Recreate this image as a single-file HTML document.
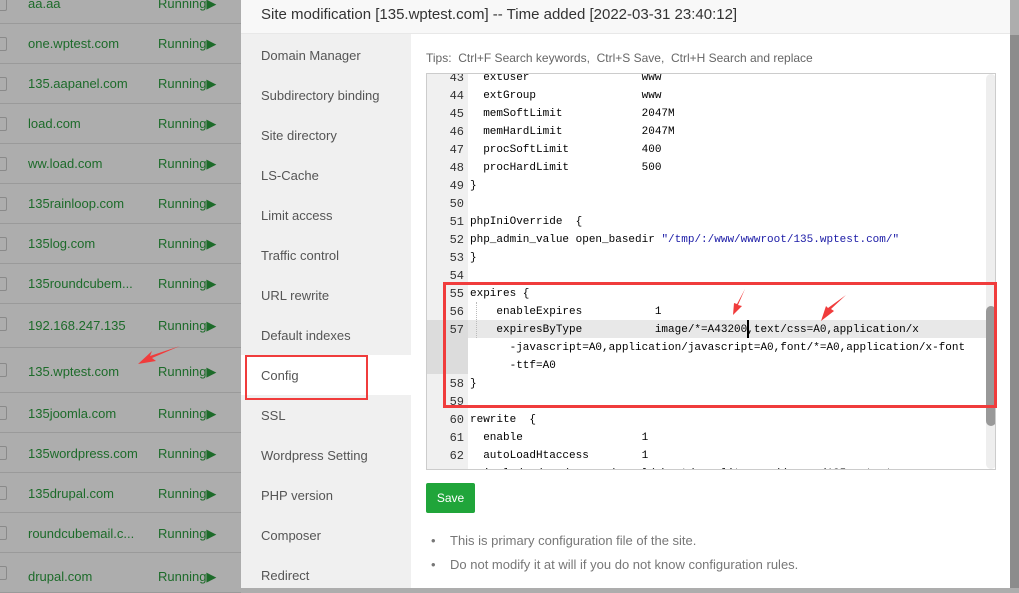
<!DOCTYPE html>
<html><head><meta charset="utf-8"><style>
*{margin:0;padding:0;box-sizing:border-box}
body{width:1019px;height:588px;overflow:hidden;position:relative;font-family:"Liberation Sans",sans-serif;background:#adadad}
.row{position:absolute;left:0;width:241px;height:40px;border-bottom:1px solid #9a9a9a;font-size:13px}
.row .cb{position:absolute;left:-6px;top:13px;width:13px;height:14px;border:1px solid #8a8a8a;border-radius:2px}
.row .n{position:absolute;left:28px;color:#1d6b2a}
.row .s{position:absolute;left:158px;color:#1d6b2a}
.modal{position:absolute;left:241px;top:0;width:769px;height:588px;background:#fff}
.title{height:34px;background:#f8f8f8;border-bottom:1px solid #e8e8e8;font-size:15px;color:#333;padding:6px 0 0 20px}
.menu{position:absolute;left:0;top:34px;width:170px;height:554px;background:#f0f0f0}
.mi{position:absolute;left:20px;font-size:13px;color:#555}
.ed{position:absolute;left:185px;top:73px;width:570px;height:397px;border:1px solid #ccc;overflow:hidden;background:#fff}
.gut{position:absolute;left:0;top:0;width:41px;height:100%;background:#f0f0f0}
.ln{position:absolute;left:0;width:37px;text-align:right;font:12px "Liberation Mono",monospace;color:#333;height:18px;line-height:18px}
.cd{position:absolute;left:43px;font:11px "Liberation Mono",monospace;color:#000;white-space:pre;height:18px;line-height:18px}
.str{color:#1a1aa6}
</style></head><body>
<div class="row" style="top:-16px"><div class="cb"></div><span class="n" style="top:12px">aa.aa</span><span class="s" style="top:12px">Running▶</span></div>
<div class="row" style="top:24px"><div class="cb"></div><span class="n" style="top:12px">one.wptest.com</span><span class="s" style="top:12px">Running▶</span></div>
<div class="row" style="top:64px"><div class="cb"></div><span class="n" style="top:12px">135.aapanel.com</span><span class="s" style="top:12px">Running▶</span></div>
<div class="row" style="top:104px"><div class="cb"></div><span class="n" style="top:12px">load.com</span><span class="s" style="top:12px">Running▶</span></div>
<div class="row" style="top:144px"><div class="cb"></div><span class="n" style="top:12px">ww.load.com</span><span class="s" style="top:12px">Running▶</span></div>
<div class="row" style="top:184px"><div class="cb"></div><span class="n" style="top:12px">135rainloop.com</span><span class="s" style="top:12px">Running▶</span></div>
<div class="row" style="top:224px"><div class="cb"></div><span class="n" style="top:12px">135log.com</span><span class="s" style="top:12px">Running▶</span></div>
<div class="row" style="top:264px"><div class="cb"></div><span class="n" style="top:12px">135roundcubem...</span><span class="s" style="top:12px">Running▶</span></div>
<div class="row" style="top:304px;height:44px"><div class="cb"></div><span class="n" style="top:14px">192.168.247.135</span><span class="s" style="top:14px">Running▶</span></div>
<div class="row" style="top:348px;height:45px"><div class="cb" style="top:15px"></div><span class="n" style="top:16px">135.wptest.com</span><span class="s" style="top:16px">Running▶</span></div>
<div class="row" style="top:393px"><div class="cb"></div><span class="n" style="top:13px">135joomla.com</span><span class="s" style="top:13px">Running▶</span></div>
<div class="row" style="top:433px"><div class="cb"></div><span class="n" style="top:13px">135wordpress.com</span><span class="s" style="top:13px">Running▶</span></div>
<div class="row" style="top:473px"><div class="cb"></div><span class="n" style="top:13px">135drupal.com</span><span class="s" style="top:13px">Running▶</span></div>
<div class="row" style="top:513px"><div class="cb"></div><span class="n" style="top:13px">roundcubemail.c...</span><span class="s" style="top:13px">Running▶</span></div>
<div class="row" style="top:553px"><div class="cb"></div><span class="n" style="top:16px">drupal.com</span><span class="s" style="top:16px">Running▶</span></div>
<svg style="position:absolute;left:136px;top:344px" width="46" height="24"><path d="M44 2 L14 12 L16 7 L2 20 L20 17 L16 14 Z" fill="#f03c3c"/></svg>
<div style="position:absolute;left:1010px;top:35px;width:9px;height:553px;background:#8c8c8c"></div>

<div class="modal">
<div class="title">Site modification [135.wptest.com] -- Time added [2022-03-31 23:40:12]</div>
<div class="menu">
<div class="mi" style="top:14px">Domain Manager</div>
<div class="mi" style="top:54px">Subdirectory binding</div>
<div class="mi" style="top:94px">Site directory</div>
<div class="mi" style="top:134px">LS-Cache</div>
<div class="mi" style="top:174px">Limit access</div>
<div class="mi" style="top:214px">Traffic control</div>
<div class="mi" style="top:254px">URL rewrite</div>
<div class="mi" style="top:294px">Default indexes</div>
<div style="position:absolute;left:0;top:321px;width:170px;height:40px;background:#fff"></div>
<div style="position:absolute;left:4px;top:321px;width:123px;height:45px;border:2px solid #f03c3c"></div>
<div class="mi" style="top:334px">Config</div>
<div class="mi" style="top:374px">SSL</div>
<div class="mi" style="top:414px">Wordpress Setting</div>
<div class="mi" style="top:454px">PHP version</div>
<div class="mi" style="top:494px">Composer</div>
<div class="mi" style="top:534px">Redirect</div>
</div>
<div style="position:absolute;left:185px;top:51px;font-size:12px;color:#666">Tips:&nbsp; Ctrl+F Search keywords,&nbsp; Ctrl+S Save,&nbsp; Ctrl+H Search and replace</div>
<div class="ed">
<div class="gut"></div>
<div style="position:absolute;left:0;top:246px;width:41px;height:54px;background:#dcdcdc"></div>
<div style="position:absolute;left:41px;top:246px;width:520px;height:18px;background:#e8e8e8"></div>
<div style="position:absolute;left:49px;top:228px;width:0;height:36px;border-left:1px dotted #bbb"></div>
<div class="ln" style="top:-5px">43</div><div class="cd" style="top:-5px">  extUser                 www</div>
<div class="ln" style="top:13px">44</div><div class="cd" style="top:13px">  extGroup                www</div>
<div class="ln" style="top:31px">45</div><div class="cd" style="top:31px">  memSoftLimit            2047M</div>
<div class="ln" style="top:49px">46</div><div class="cd" style="top:49px">  memHardLimit            2047M</div>
<div class="ln" style="top:67px">47</div><div class="cd" style="top:67px">  procSoftLimit           400</div>
<div class="ln" style="top:85px">48</div><div class="cd" style="top:85px">  procHardLimit           500</div>
<div class="ln" style="top:103px">49</div><div class="cd" style="top:103px">}</div>
<div class="ln" style="top:121px">50</div>
<div class="ln" style="top:139px">51</div><div class="cd" style="top:139px">phpIniOverride  {</div>
<div class="ln" style="top:157px">52</div><div class="cd" style="top:157px">php_admin_value open_basedir <span class="str">"/tmp/:/www/wwwroot/135.wptest.com/"</span></div>
<div class="ln" style="top:175px">53</div><div class="cd" style="top:175px">}</div>
<div class="ln" style="top:193px">54</div>
<div class="ln" style="top:211px">55</div><div class="cd" style="top:211px">expires {</div>
<div class="ln" style="top:229px">56</div><div class="cd" style="top:229px">    enableExpires           1</div>
<div class="ln" style="top:247px">57</div><div class="cd" style="top:247px">    expiresByType           image/*=A43200,text/css=A0,application/x</div>
<div class="cd" style="top:265px">      -javascript=A0,application/javascript=A0,font/*=A0,application/x-font</div>
<div class="cd" style="top:283px">      -ttf=A0</div>
<div class="ln" style="top:301px">58</div><div class="cd" style="top:301px">}</div>
<div class="ln" style="top:319px">59</div>
<div class="ln" style="top:337px">60</div><div class="cd" style="top:337px">rewrite  {</div>
<div class="ln" style="top:355px">61</div><div class="cd" style="top:355px">  enable                  1</div>
<div class="ln" style="top:373px">62</div><div class="cd" style="top:373px">  autoLoadHtaccess        1</div>
<div class="ln" style="top:391px">63</div><div class="cd" style="top:391px">  include /usr/server/panel/vhost/openlitespeed/proxy/135.wptest.com</div>
<div style="position:absolute;left:559px;top:0;width:10px;height:395px;background:#eee;border-radius:5px"></div>
<div style="position:absolute;left:559px;top:232px;width:10px;height:120px;background:#999;border-radius:5px"></div>
<div style="position:absolute;left:320px;top:246px;width:2px;height:18px;background:#000"></div>
</div>
<div style="position:absolute;left:202px;top:282px;width:554px;height:126px;border:3px solid #f03c3c"></div>
<svg style="position:absolute;left:485px;top:285px" width="130" height="45"><path d="M19 4 L12 20 L16 21 L7 30 L8 18 L11 19 Z" fill="#f03c3c"/><path d="M120 10 L105 24 L108 26 L95 36 L100 21 L102 23 Z" fill="#f03c3c"/></svg>
<div style="position:absolute;left:185px;top:483px;width:49px;height:30px;background:#20a53a;border-radius:2px;color:#fff;font-size:12px;text-align:center;line-height:30px">Save</div>
<div style="position:absolute;left:190px;top:533px;font-size:13px;color:#777">•&nbsp;&nbsp;&nbsp;&nbsp;This is primary configuration file of the site.</div>
<div style="position:absolute;left:190px;top:557px;font-size:13px;color:#777">•&nbsp;&nbsp;&nbsp;&nbsp;Do not modify it at will if you do not know configuration rules.</div>
</div>
</body></html>
